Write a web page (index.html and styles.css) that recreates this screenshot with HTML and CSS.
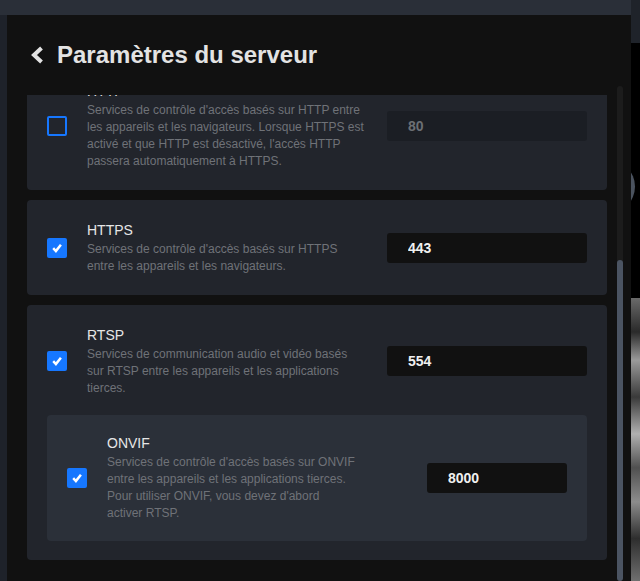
FILE: index.html
```html
<!DOCTYPE html>
<html lang="fr">
<head>
<meta charset="utf-8">
<title>Paramètres du serveur</title>
<link rel="stylesheet" href="styles.css">
</head>
<body>
<div class="app">
  <div class="appbar"></div>
  <div class="app-body">
    <div class="rail"></div>
    <main class="panel">
      <header class="panel-head">
        <svg class="back" width="14" height="18" viewBox="0 0 14 18" aria-hidden="true">
          <polyline points="11.5,2 4,9 11.5,16" fill="none" stroke="#e3e3e3" stroke-width="4"/>
        </svg>
        <h1 class="title">Paramètres du serveur</h1>
      </header>
      <div class="panel-body">
        <div class="viewport">
          <div class="list">
            <section class="card">
              <div class="row">
                <span class="check"></span>
                <div class="text">
                  <div class="name">HTTP</div>
                  <p class="desc">Services de contrôle d'accès basés sur HTTP entre les appareils et les navigateurs. Lorsque HTTPS est activé et que HTTP est désactivé, l'accès HTTP passera automatiquement à HTTPS.</p>
                </div>
                <input class="port disabled" type="text" value="80" disabled>
              </div>
            </section>
            <section class="card">
              <div class="row">
                <span class="check on"><svg width="20" height="20" viewBox="0 0 20 20"><polyline points="6.2,10.2 8.9,13 13.9,6.8" fill="none" stroke="#fff" stroke-width="2.5"/></svg></span>
                <div class="text">
                  <div class="name">HTTPS</div>
                  <p class="desc">Services de contrôle d'accès basés sur HTTPS entre les appareils et les navigateurs.</p>
                </div>
                <input class="port" type="text" value="443">
              </div>
            </section>
            <section class="card">
              <div class="row">
                <span class="check on"><svg width="20" height="20" viewBox="0 0 20 20"><polyline points="6.2,10.2 8.9,13 13.9,6.8" fill="none" stroke="#fff" stroke-width="2.5"/></svg></span>
                <div class="text">
                  <div class="name">RTSP</div>
                  <p class="desc">Services de communication audio et vidéo basés sur RTSP entre les appareils et les applications tierces.</p>
                </div>
                <input class="port" type="text" value="554">
              </div>
              <div class="sub">
                <div class="row sub-row">
                  <span class="check on"><svg width="20" height="20" viewBox="0 0 20 20"><polyline points="6.2,10.2 8.9,13 13.9,6.8" fill="none" stroke="#fff" stroke-width="2.5"/></svg></span>
                  <div class="text">
                    <div class="name">ONVIF</div>
                    <p class="desc">Services de contrôle d'accès basés sur ONVIF entre les appareils et les applications tierces. Pour utiliser ONVIF, vous devez d'abord activer RTSP.</p>
                  </div>
                  <input class="port small" type="text" value="8000">
                </div>
              </div>
            </section>
          </div>
        </div>
        <div class="scrollbar"><div class="thumb"></div></div>
      </div>
    </main>
  </div>
</div>
<aside class="side">
  <div class="side-top"></div>
  <div class="side-mid"><div class="orb"></div></div>
  <div class="side-photo"></div>
</aside>
</body>
</html>
```
FILE: styles.css
```css
* { box-sizing: border-box; }

html, body {
  margin: 0;
  height: 581px;
  overflow: hidden;
}

body {
  display: flex;
  background: #000;
  font-family: "Liberation Sans", Arial, sans-serif;
}

.app {
  width: 631px;
  display: flex;
  flex-direction: column;
}

.appbar {
  height: 15px;
  background: #2a2f38;
}

.app-body {
  flex: 1;
  display: flex;
  min-height: 0;
}

.rail {
  width: 7px;
  background: #1e222a;
}

.panel {
  flex: 1;
  display: flex;
  flex-direction: column;
  min-height: 0;
  background: #111111;
}

.panel-head {
  display: flex;
  align-items: center;
  padding: 25px 0 16px 23px;
}

.back { display: block; }

.title {
  margin: 0 0 0 13px;
  font: 700 24px/30px "Liberation Sans", Arial, sans-serif;
  color: #e3e3e3;
}

.panel-body {
  flex: 1;
  display: flex;
  min-height: 0;
  padding-left: 20px;
}

.viewport {
  flex: 0 0 580px;
  margin-top: 9px;
  overflow: hidden;
}

.list {
  margin-top: -34px;
  display: flex;
  flex-direction: column;
  gap: 10px;
}

.card {
  background: #22252c;
  border-radius: 4px;
  padding: 20px;
}

.row {
  display: grid;
  grid-template-columns: 20px 280px 200px;
  column-gap: 20px;
  align-items: center;
}

.check {
  display: block;
  width: 20px;
  height: 20px;
  border: 2px solid #1677ff;
  border-radius: 2px;
}

.check.on {
  border: none;
  background: #1677ff;
}

.check svg { display: block; }

.name {
  font-size: 14px;
  line-height: 21px;
  color: #e6e6e6;
}

.desc {
  margin: 0;
  font-size: 12px;
  line-height: 17px;
  color: #6f7278;
}

.port {
  width: 200px;
  height: 30px;
  border: none;
  border-radius: 3px;
  padding: 0 21px;
  background: #111111;
  color: #f0f0f0;
  font: 700 14px "Liberation Sans", Arial, sans-serif;
  outline: none;
}

.port.disabled {
  background: #1b1e24;
  color: #6c6f74;
}

.sub {
  margin-top: 18px;
  margin-bottom: -1px;
  background: #2b3039;
  border-radius: 4px;
  padding: 18px 20px 19px;
}

.sub-row {
  grid-template-columns: 20px 249px 1fr;
}

.port.small {
  width: 140px;
  justify-self: end;
}

.scrollbar {
  width: 6px;
  margin-left: 10px;
  display: flex;
  flex-direction: column;
  background: #1c1c1c;
  border-radius: 3px;
}

.thumb {
  flex: 1;
  margin-top: 174px;
  background: #4b5462;
  border-radius: 3px;
}

.side {
  flex: 1;
  display: flex;
  flex-direction: column;
  overflow: hidden;
}

.side-top {
  height: 43px;
  background: #1f232a;
}

.side-mid {
  height: 255px;
  background: #000;
}

.orb {
  width: 53px;
  height: 53px;
  margin-top: 117px;
  margin-left: -49px;
  border-radius: 50%;
  background: #4a525e;
}

.side-photo {
  flex: 1;
  background:
    linear-gradient(180deg, #6a6a6a 0%, #2a2a2a 12%, #9a9a9a 22%, #3a3a3a 35%, #b0b0b0 48%, #505050 60%, #8c8c8c 72%, #2e2e2e 85%, #6f6f6f 100%);
}
```
